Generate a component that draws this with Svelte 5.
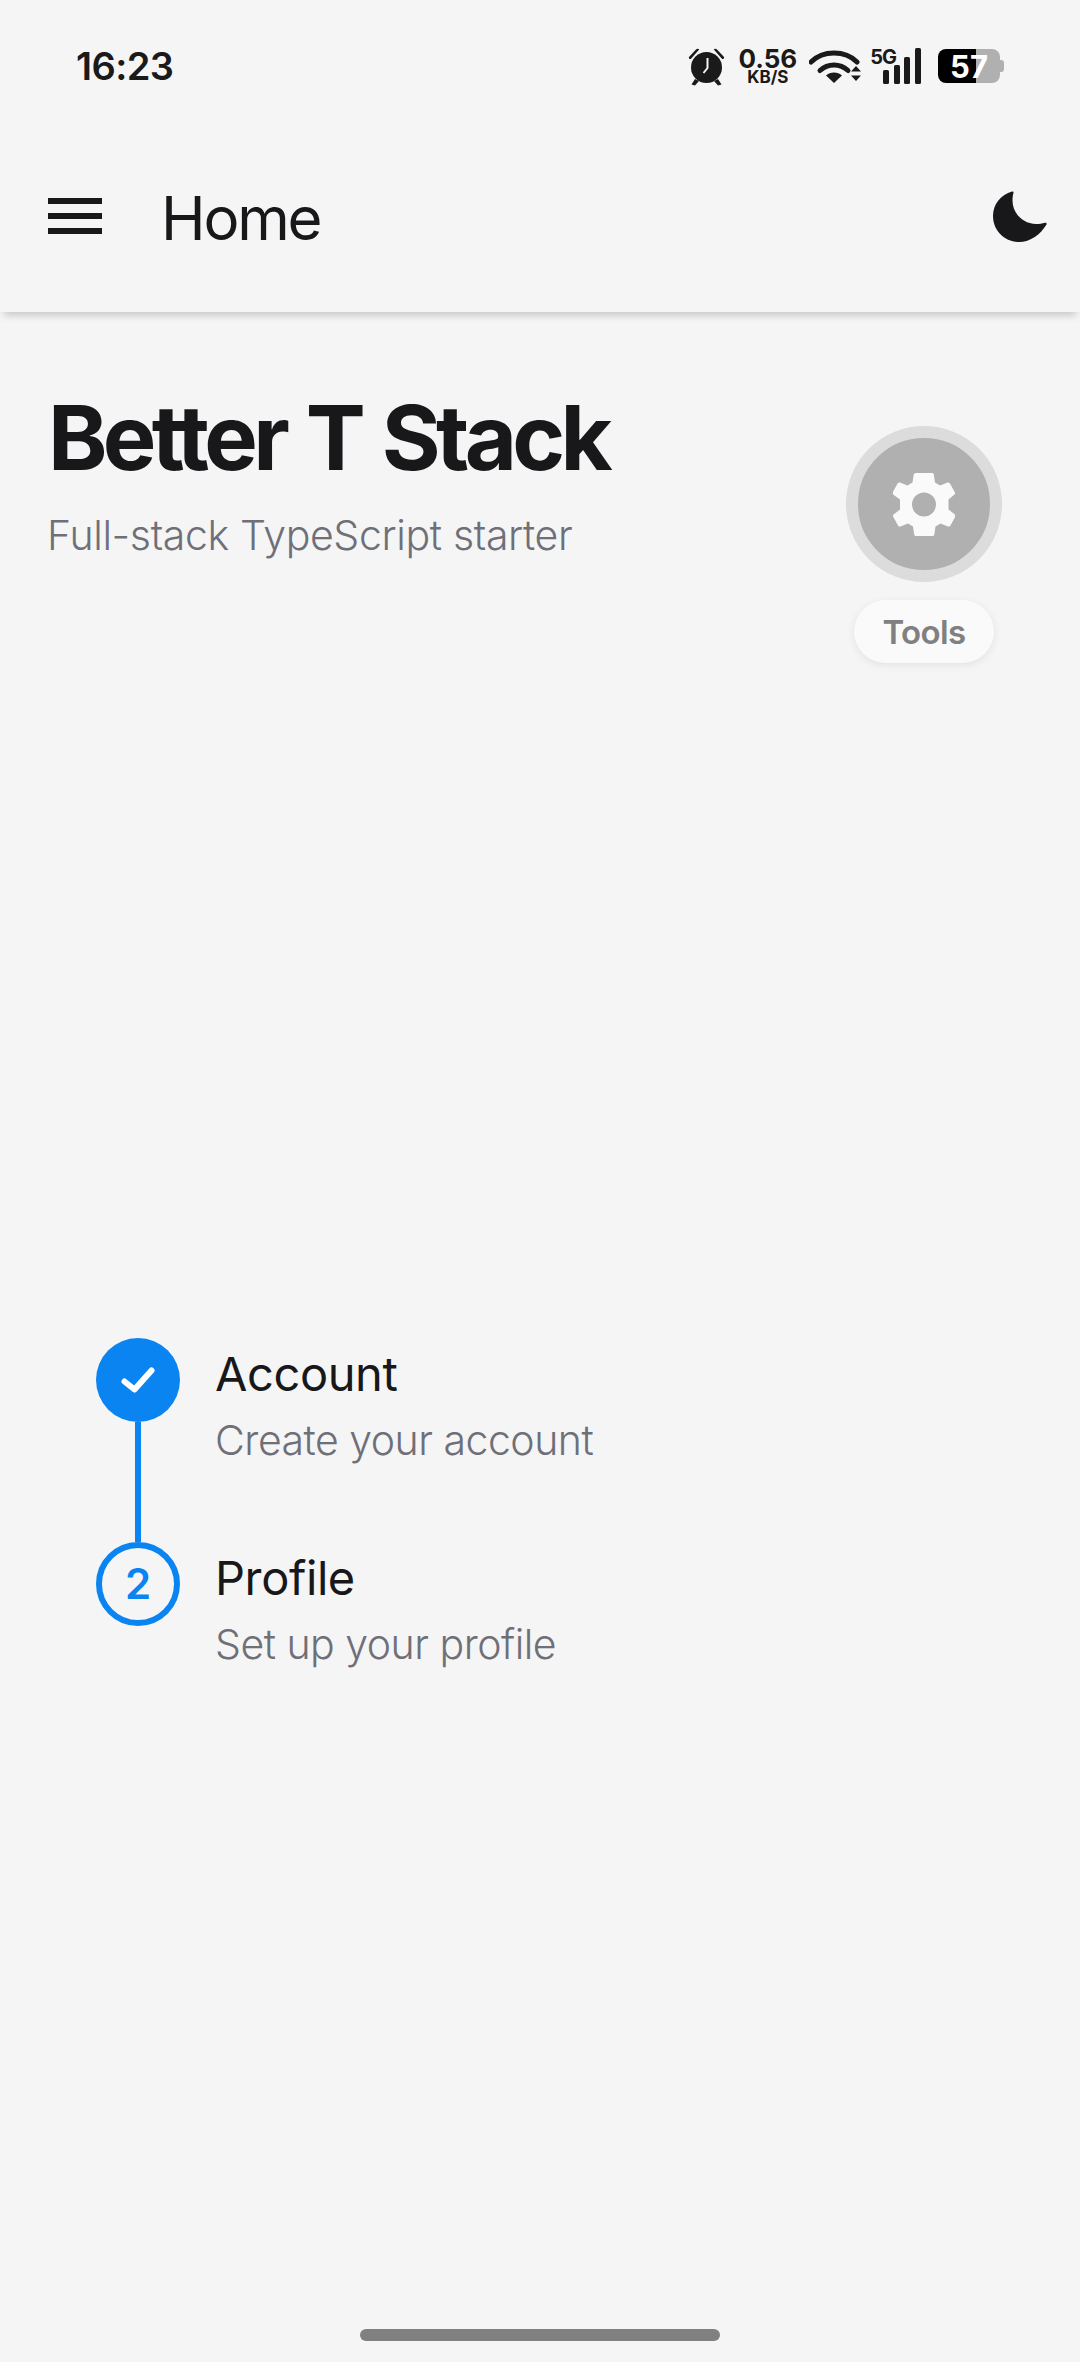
<script lang="ts">
  const steps = [
    { title: "Account", hint: "Create your account", done: true },
    { title: "Profile", hint: "Set up your profile", done: false }
  ];
</script>

<main class="page">
  <div class="status">
    <span class="time">16:23</span>
    <div class="status-right">
      <svg class="alarm" viewBox="0 0 37 39" width="37" height="39">
        <path d="M1 10 8 2.500c1-1 2.500-1 3.200 0L2.800 12C1.500 12.500.4 11 1 10ZM36 10 29 2.500c-1-1-2.500-1-3.200 0L34.200 12c1.300.5 2.400-1 1.800-2Z" fill="#1a1a1a"/>
        <circle cx="18.500" cy="20.500" r="15.500" fill="#1a1a1a"/>
        <path d="M7 32 3.500 37.500l3.500 1 4-4.500ZM30 32l3.500 5.500-3.500 1-4-4.500Z" fill="#1a1a1a"/>
        <path d="M19.500 11v10l-4 5" fill="none" stroke="#f5f5f5" stroke-width="2"/>
      </svg>
      <div class="speed"><span class="speed-num">0.56</span><span class="speed-unit">KB/S</span></div>
      <svg class="wifi" viewBox="0 0 52 36" width="52" height="36">
        <path d="M2 14C14 2 36 2 48 14" fill="none" stroke="#1a1a1a" stroke-width="5" stroke-linecap="round"/>
        <path d="M11 22.500C19 15 31 15 39 22.500" fill="none" stroke="#1a1a1a" stroke-width="5" stroke-linecap="round"/>
        <path d="M17 27.500 25 35l8-7.500c-4-4-12-4-16 0Z" fill="#1a1a1a"/>
        <path d="M42 23.500 47 18l5 5.500ZM42 27.500l5 5.500 5-5.500Z" fill="#1a1a1a"/>
      </svg>
      <div class="signal">
        <span class="five-g">5G</span>
        <svg viewBox="0 0 38 36" width="38" height="36">
          <rect x="0" y="22" width="6" height="14" rx="1.500" fill="#1a1a1a"/>
          <rect x="11" y="17" width="6" height="19" rx="1.500" fill="#1a1a1a"/>
          <rect x="21" y="9" width="6" height="27" rx="1.500" fill="#1a1a1a"/>
          <rect x="32" y="0" width="6" height="36" rx="1.500" fill="#1a1a1a"/>
        </svg>
      </div>
      <div class="battery"><span>57</span></div>
    </div>
  </div>

  <header class="topbar">
    <button class="menu" aria-label="Menu"><i></i><i></i><i></i></button>
    <h1 class="topbar-title">Home</h1>
    <svg class="moon" viewBox="0 0 54 52" width="54" height="52">
      <path d="M19 1.500C8 4.500 0 14 0 26c0 14.500 11.500 26 26 26 11.500 0 21.500-7.500 27.500-17.500.5-1-.3-2-1.400-1.700-3 .9-6 1.200-9 1.200C30 34 19.500 23.500 19.500 10.500c0-2.800.3-5.500 1-7.800.3-1-.5-1.500-1.500-1.200Z" fill="#18181b"/>
    </svg>
  </header>

  <section class="hero">
    <h2>Better T Stack</h2>
    <p>Full-stack TypeScript starter</p>
    <div class="tools">
      <div class="fab">
        <svg viewBox="0 0 62 63" width="62" height="63">
          <path fill="#fafafa" fill-rule="evenodd" d="M23 0h16c1 0 1.700.6 1.800 1.500l1.200 8 5 3 7.500-3c.9-.3 1.800 0 2.300.8l5 9c.5.8.3 1.700-.4 2.300L55.500 26.500v10l6.400 4.900c.7.6.9 1.500.4 2.300l-5 9c-.5.8-1.400 1.100-2.300.8l-7.500-3-5 3-1.200 8c-.1.900-.8 1.500-1.800 1.500H23c-1 0-1.700-.6-1.800-1.500l-1.200-8-5-3-7.500 3c-.9.3-1.800 0-2.300-.8l-5-9c-.5-.8-.3-1.700.4-2.300l6.400-4.900v-10L.1 21.600c-.7-.6-.9-1.500-.4-2.300l5-9c.5-.8 1.400-1.100 2.300-.8l7.500 3 5-3 1.200-8C21.300.6 22 0 23 0Zm8 19.500a12 12 0 1 0 0 24 12 12 0 0 0 0-24Z"/>
        </svg>
      </div>
      <span class="tools-label">Tools</span>
    </div>
  </section>

  <ol class="steps">
    {#each steps as step, i}
      <li class="step">
        <div class="rail">
          {#if step.done}
            <span class="dot dot-done">
              <svg viewBox="0 0 34 26" width="34" height="26">
                <path d="M3.500 14.500 13.500 22.500 30.500 3.500" fill="none" stroke="#fff" stroke-width="6" stroke-linecap="round" stroke-linejoin="round"/>
              </svg>
            </span>
          {:else}
            <span class="dot dot-todo">{i + 1}</span>
          {/if}
          {#if i < steps.length - 1}<span class="line"></span>{/if}
        </div>
        <div class="step-text">
          <h3>{step.title}</h3>
          <p>{step.hint}</p>
        </div>
      </li>
    {/each}
  </ol>

  <div class="home-bar"></div>
</main>

<style>
  :global(body) {
    margin: 0;
    background: #f5f5f5;
  }
  .page {
    display: flex;
    flex-direction: column;
    height: 2362px;
    background: #f5f5f5;
    font-family: Inter, "Liberation Sans", sans-serif;
    color: #18181b;
    overflow: hidden;
  }
  .status {
    display: flex;
    align-items: center;
    justify-content: space-between;
    height: 132px;
    padding: 0 80px 0 76px;
    flex-shrink: 0;
  }
  .time {
    font-size: 38px;
    font-weight: 600;
    letter-spacing: -0.6px;
    color: #1a1a1a;
  }
  .status-right {
    display: flex;
    align-items: center;
    gap: 12px;
  }
  .alarm {
    margin-right: 1px;
  }
  .speed {
    display: flex;
    flex-direction: column;
    align-items: center;
    font-weight: 700;
    color: #1a1a1a;
  }
  .speed-num {
    font-size: 26px;
    line-height: 22px;
  }
  .speed-unit {
    font-size: 17px;
    line-height: 15px;
  }
  .signal {
    display: flex;
    align-items: flex-start;
    margin-left: -3px;
  }
  .five-g {
    font-size: 20px;
    font-weight: 700;
    line-height: 18px;
    letter-spacing: -1px;
    margin-right: -13px;
    color: #1a1a1a;
  }
  .battery {
    display: flex;
    align-items: center;
    justify-content: center;
    position: relative;
    width: 62px;
    height: 34px;
    margin-left: 5px;
    border-radius: 8px;
    background: linear-gradient(90deg, #000 61.3%, #b0b0b0 61.3%);
    color: #fff;
    font-size: 31px;
    font-weight: 700;
  }
  .battery::after {
    content: "";
    position: absolute;
    right: -4px;
    top: 11px;
    width: 4px;
    height: 12px;
    border-radius: 0 3px 3px 0;
    background: #b0b0b0;
  }
  .topbar {
    display: flex;
    align-items: center;
    height: 180px;
    padding: 0 33px 12px 48px;
    box-sizing: border-box;
    background: #f5f5f5;
    box-shadow: 0 7px 8px -4px rgba(0, 0, 0, 0.2);
    flex-shrink: 0;
  }
  .menu {
    display: flex;
    flex-direction: column;
    gap: 9px;
    width: 54px;
    padding: 0;
    border: 0;
    background: none;
  }
  .menu i {
    display: block;
    height: 6px;
    background: #18181b;
  }
  .topbar-title {
    flex: 1;
    margin: 3px 0 0 59px;
    font-size: 60px;
    font-weight: 400;
    letter-spacing: -2.2px;
  }
  .hero {
    position: relative;
    padding: 76px 48px 0;
  }
  .hero h2 {
    margin: 0;
    font-size: 90px;
    font-weight: 700;
    letter-spacing: -4.7px;
    word-spacing: 4px;
    line-height: 100px;
  }
  .hero p {
    margin: 22px 0 0 -1px;
    font-size: 41px;
    font-weight: 300;
    letter-spacing: -0.35px;
    color: #6f6f78;
  }
  .tools {
    position: absolute;
    top: 114px;
    right: 78px;
    display: flex;
    flex-direction: column;
    align-items: center;
    gap: 18px;
  }
  .fab {
    display: flex;
    align-items: center;
    justify-content: center;
    width: 132px;
    height: 132px;
    border: 12px solid #dcdcdc;
    border-radius: 50%;
    background: #b0b0b0;
  }
  .tools-label {
    display: flex;
    align-items: center;
    justify-content: center;
    width: 140px;
    height: 63px;
    border-radius: 32px;
    background: #fafafa;
    color: #808080;
    font-size: 33px;
    font-weight: 600;
    letter-spacing: -0.6px;
    box-shadow: 0 2px 8px rgba(0, 0, 0, 0.08);
  }
  .steps {
    margin: 778px 0 0;
    padding: 0 0 0 96px;
    list-style: none;
  }
  .step {
    display: flex;
    gap: 35px;
  }
  .rail {
    display: flex;
    flex-direction: column;
    align-items: center;
    width: 84px;
  }
  .dot {
    display: flex;
    align-items: center;
    justify-content: center;
    box-sizing: border-box;
    width: 84px;
    height: 84px;
    border-radius: 50%;
    font-size: 42px;
    font-weight: 600;
  }
  .dot-done {
    background: #0a84f0;
  }
  .dot-todo {
    border: 6px solid #0a84f0;
    padding-bottom: 2px;
    color: #0a84f0;
  }
  .line {
    width: 6px;
    height: 120px;
    background: #0a84f0;
  }
  .step-text h3 {
    margin: 8px 0 0;
    font-size: 47px;
    font-weight: 400;
    letter-spacing: -0.4px;
    line-height: 56px;
  }
  .step-text p {
    margin: 13px 0 0;
    font-size: 41px;
    font-weight: 300;
    letter-spacing: -0.5px;
    line-height: 50px;
    color: #6f6f78;
  }
  .home-bar {
    width: 360px;
    height: 12px;
    margin: auto auto 21px;
    border-radius: 6px;
    background: #808080;
  }
</style>
